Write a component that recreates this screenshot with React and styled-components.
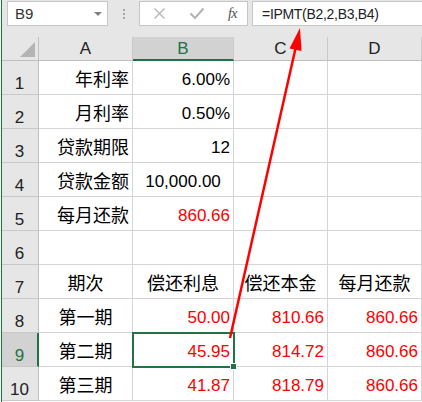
import React from "react";
import styled, { createGlobalStyle } from "styled-components";

const Global = createGlobalStyle`
  html, body { margin: 0; padding: 0; background: #f2f2f2; overflow: hidden; }
  * { box-sizing: border-box; }
`;

const GREEN = "#217346";
const FONT = `"Liberation Sans", "Noto Sans CJK SC", Arial, sans-serif`;

const Frame = styled.div`
  position: relative;
  width: 421px;
  height: 402px;
  margin-left: 1px;
  border-left: 1px solid ${GREEN};
  background: #fff;
  overflow: hidden;
  display: flex;
  flex-direction: column;
  font-family: ${FONT};
`;

const Toolbar = styled.div`
  height: 37px;
  flex: none;
  background: #e6e6e6;
  display: flex;
  align-items: flex-start;
  padding: 1px 0 0 5px;
`;

const Box = styled.div`
  height: 25px;
  background: #fff;
  border: 1px solid #c6c6c6;
  display: flex;
  align-items: center;
  flex: none;
`;

const NameBox = styled(Box)`
  width: 101px;
  padding: 0 0 0 7px;
  justify-content: space-between;
  font-size: 15px;
  color: #333;
`;

const Caret = styled.span`
  width: 0;
  height: 0;
  margin-right: 5px;
  border-left: 4px solid transparent;
  border-right: 4px solid transparent;
  border-top: 4px solid #808080;
`;

const Grip = styled.div`
  width: 31px;
  height: 25px;
  display: flex;
  flex-direction: column;
  align-items: center;
  justify-content: center;
  gap: 2px;
  flex: none;
`;

const GripDot = styled.span`
  width: 2px;
  height: 2px;
  background: #a6a6a6;
`;

const FxBox = styled(Box)`
  width: 109px;
  padding: 0 10px 0 13px;
  justify-content: space-between;
`;

const Fx = styled.span`
  font-family: "Liberation Serif", "DejaVu Serif", serif;
  font-style: italic;
  font-size: 14px;
  color: #4d4d4d;
  letter-spacing: -0.5px;
`;

const FormulaBox = styled(Box)`
  margin-left: 4px;
  flex: 1;
  margin-right: -4px;
  padding-left: 9px;
  font-size: 14px;
  letter-spacing: -0.3px;
  color: #222;
`;

const Sheet = styled.div`
  display: grid;
  grid-template-columns: 37px 94px 101px 94px 1fr;
  grid-template-rows: 24px repeat(10, 34px);
`;

const Corner = styled.div`
  background: #e6e6e6;
  border-right: 1px solid #bfbfbf;
  border-bottom: 1px solid #bfbfbf;
  display: flex;
  justify-content: flex-end;
  align-items: flex-end;
  padding: 0 3px 3px 0;
`;

const Triangle = styled.span`
  width: 0;
  height: 0;
  border-left: 15px solid transparent;
  border-bottom: 15px solid #b4b4b4;
`;

const ColHead = styled.div`
  background: ${(p) => (p.$active ? "#d2d2d2" : "#e6e6e6")};
  border-right: 1px solid #cacaca;
  border-bottom: ${(p) => (p.$active ? `2px solid ${GREEN}` : "1px solid #bfbfbf")};
  color: ${(p) => (p.$active ? GREEN : "#222")};
  font-size: 17px;
  line-height: 20px;
  display: flex;
  justify-content: center;
  align-items: flex-end;
  padding-bottom: ${(p) => (p.$active ? "0px" : "1px")};
`;

const RowHead = styled.div`
  background: ${(p) => (p.$active ? "#d2d2d2" : "#e6e6e6")};
  border-right: ${(p) => (p.$active ? `2px solid ${GREEN}` : "1px solid #bfbfbf")};
  border-bottom: 1px solid #c8c8c8;
  color: ${(p) => (p.$active ? GREEN : "#222")};
  font-size: 17px;
  line-height: 20px;
  display: flex;
  justify-content: center;
  align-items: flex-end;
  padding: 0 ${(p) => (p.$active ? "0px" : "1px")} 0 0;
`;

const Cell = styled.div`
  position: relative;
  z-index: ${(p) => (p.$sel ? 1 : "auto")};
  border-right: 1px solid #d4d4d4;
  border-bottom: 1px solid #d4d4d4;
  font-size: ${(p) => (p.$cjk ? "18px" : "17px")};
  line-height: 20px;
  color: ${(p) => (p.$red ? "#ff0000" : "#000")};
  display: flex;
  align-items: flex-end;
  justify-content: ${(p) => (p.$center ? "center" : "flex-end")};
  padding: 0 3px 4px 3px;
  white-space: nowrap;
`;

const Selection = styled.div`
  position: absolute;
  top: -1px;
  left: -1px;
  right: -2px;
  bottom: -2px;
  border: 2px solid ${GREEN};
  pointer-events: none;
`;

const FillHandle = styled.span`
  position: absolute;
  right: -4px;
  bottom: -4px;
  width: 7px;
  height: 7px;
  background: ${GREEN};
  border: 1px solid #fff;
`;

const Arrow = styled.svg`
  position: absolute;
  left: 0;
  top: 0;
  z-index: 2;
  pointer-events: none;
`;

const cols = ["A", "B", "C", "D"];

const rows = [
  [{ t: "年利率", cjk: 1 }, { t: "6.00%" }, {}, {}],
  [{ t: "月利率", cjk: 1 }, { t: "0.50%" }, {}, {}],
  [{ t: "贷款期限", cjk: 1 }, { t: "12" }, {}, {}],
  [{ t: "贷款金额", cjk: 1 }, { t: "10,000.00", center: 1 }, {}, {}],
  [{ t: "每月还款", cjk: 1 }, { t: "860.66", red: 1 }, {}, {}],
  [{}, {}, {}, {}],
  [
    { t: "期次", cjk: 1, center: 1 },
    { t: "偿还利息", cjk: 1, center: 1 },
    { t: "偿还本金", cjk: 1, center: 1 },
    { t: "每月还款", cjk: 1, center: 1 },
  ],
  [
    { t: "第一期", cjk: 1, center: 1 },
    { t: "50.00", red: 1 },
    { t: "810.66", red: 1 },
    { t: "860.66", red: 1 },
  ],
  [
    { t: "第二期", cjk: 1, center: 1 },
    { t: "45.95", red: 1, sel: 1 },
    { t: "814.72", red: 1 },
    { t: "860.66", red: 1 },
  ],
  [
    { t: "第三期", cjk: 1, center: 1 },
    { t: "41.87", red: 1 },
    { t: "818.79", red: 1 },
    { t: "860.66", red: 1 },
  ],
];

export default function App() {
  return (
    <>
      <Global />
      <Frame>
        <Toolbar>
          <NameBox>
            <span>B9</span>
            <Caret />
          </NameBox>
          <Grip>
            <GripDot />
            <GripDot />
            <GripDot />
          </Grip>
          <FxBox>
            <svg width="13" height="13" viewBox="0 0 13 13">
              <path d="M1.5 1.5 L11.5 11.5 M11.5 1.5 L1.5 11.5" stroke="#b3b3b3" strokeWidth="1.3" fill="none" />
            </svg>
            <svg width="16" height="13" viewBox="0 0 16 13">
              <path d="M1.5 6.5 L6 11 L14.5 1.5" stroke="#b3b3b3" strokeWidth="2" fill="none" />
            </svg>
            <Fx>fx</Fx>
          </FxBox>
          <FormulaBox>=IPMT(B2,2,B3,B4)</FormulaBox>
        </Toolbar>
        <Sheet>
          <Corner>
            <Triangle />
          </Corner>
          {cols.map((c) => (
            <ColHead key={c} $active={c === "B"}>
              {c}
            </ColHead>
          ))}
          {rows.map((r, i) => (
            <React.Fragment key={i}>
              <RowHead $active={i === 8}>{i + 1}</RowHead>
              {r.map((c, j) => (
                <Cell key={j} $cjk={c.cjk} $red={c.red} $center={c.center} $sel={c.sel}>
                  {c.t}
                  {c.sel ? (
                    <Selection>
                      <FillHandle />
                    </Selection>
                  ) : null}
                </Cell>
              ))}
            </React.Fragment>
          ))}
        </Sheet>
        <Arrow width="420" height="402" viewBox="2 0 420 402">
          <line x1="230" y1="338" x2="296.5" y2="44" stroke="#ff0000" strokeWidth="2.5" />
          <polygon points="300,28 301.5,51 289.5,48.5" fill="#ff0000" />
        </Arrow>
      </Frame>
    </>
  );
}
